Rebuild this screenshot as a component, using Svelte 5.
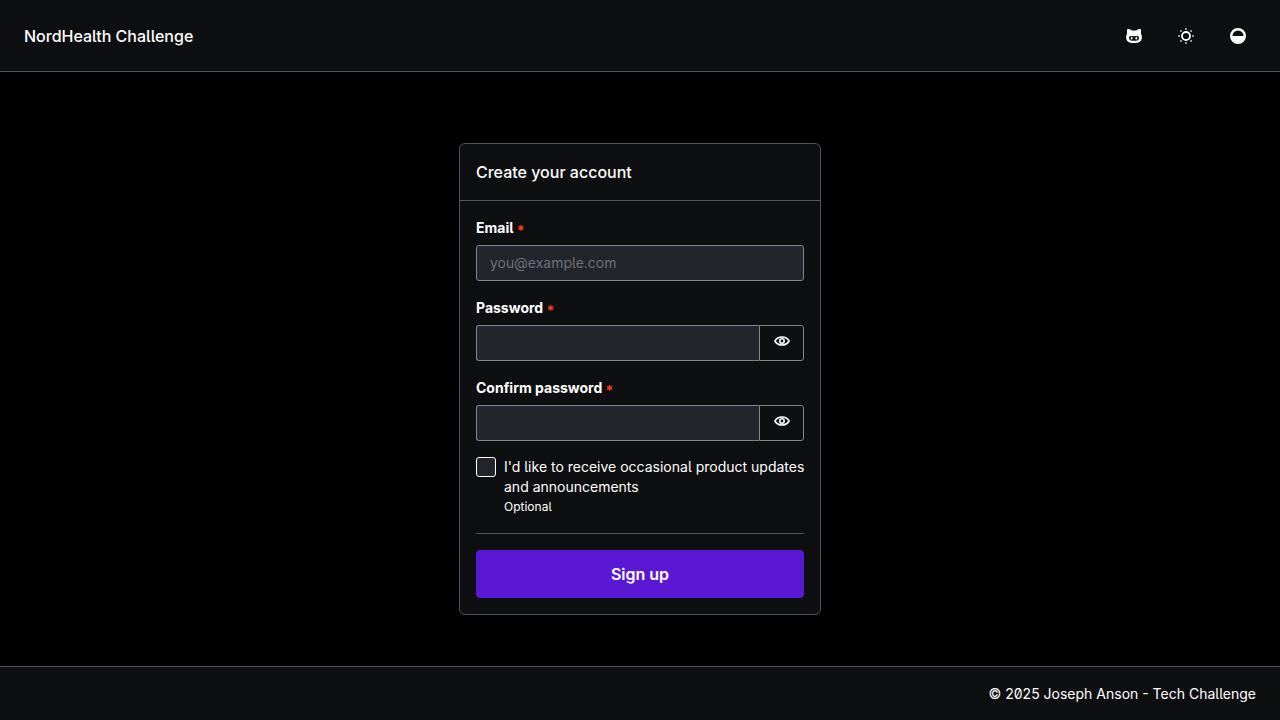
<script>
  let email = $state('');
  let password = $state('');
  let confirmation = $state('');
  let updates = $state(false);
  let visible = $state({ password: false, confirm: false });
</script>

{#snippet eye()}
  <svg class="eye" viewBox="0 0 16 16" fill="none" stroke="currentColor" stroke-width="1.6" aria-hidden="true">
    <path d="M.9 8C2.5 5.200 5.100 4 8 4S13.500 5.200 15.100 8C13.500 10.800 10.900 12 8 12S2.500 10.800 .9 8Z" stroke-linejoin="round" />
    <circle cx="8" cy="8" r="2.200" />
  </svg>
{/snippet}

<div class="page">
  <header class="topbar">
    <span class="brand">NordHealth Challenge</span>
    <nav class="actions" aria-label="Site actions">
      <a href="#source" class="icon-button" aria-label="Source code">
        <svg viewBox="0 0 16 16" aria-hidden="true">
          <path fill="currentColor" fill-rule="evenodd" d="M1 1.900C1 1.200 1.500 1 2.200 1C3.400 1 4.600 1.600 5.600 2.400H10.400C11.400 1.600 12.600 1 13.800 1C14.500 1 15 1.200 15 1.900V6C15.600 6.800 15.900 7.800 15.900 9C15.900 13 13.600 15 8 15S.1 13 .1 9C.1 7.800.4 6.800 1 6ZM5 8C3.700 8 3 8.700 3 10C3 12 4.700 12.800 8 12.800S13 12 13 10C13 8.700 12.300 8 11 8C10 8 9.200 8.200 8 8.200S6 8 5 8Z" />
          <ellipse cx="5.700" cy="10.200" rx=".9" ry="1.200" fill="currentColor" />
          <ellipse cx="10.300" cy="10.200" rx=".9" ry="1.200" fill="currentColor" />
        </svg>
      </a>
      <button type="button" class="icon-button" aria-label="Toggle theme">
        <svg viewBox="0 0 16 16" aria-hidden="true">
          <circle cx="8" cy="8" r="4" fill="none" stroke="currentColor" stroke-width="1.800" />
          <g fill="currentColor" opacity=".55">
            <rect x="7" y="0" width="2" height="2" />
            <rect x="7" y="14" width="2" height="2" />
            <rect x="0" y="7" width="2" height="2" />
            <rect x="14" y="7" width="2" height="2" />
            <rect x="2" y="2" width="2" height="2" />
            <rect x="12" y="2" width="2" height="2" />
            <rect x="2" y="12" width="2" height="2" />
            <rect x="12" y="12" width="2" height="2" />
          </g>
        </svg>
      </button>
      <button type="button" class="icon-button" aria-label="Toggle contrast">
        <svg viewBox="0 0 16 16" aria-hidden="true">
          <path fill="currentColor" fill-rule="evenodd" d="M8 0A8 8 0 1 1 8 16A8 8 0 0 1 8 0ZM2.500 8H13.500A5.500 5.500 0 0 0 2.500 8Z" />
        </svg>
      </button>
    </nav>
  </header>

  <main>
    <section class="card">
      <h1>Create your account</h1>
      <form onsubmit={(e) => e.preventDefault()} novalidate>
        <div class="field">
          <label for="email">Email <span class="required">*</span></label>
          <input id="email" class="control" type="email" placeholder="you@example.com" required bind:value={email} />
        </div>

        <div class="field">
          <label for="password">Password <span class="required">*</span></label>
          <div class="group">
            <input id="password" class="control" type={visible.password ? 'text' : 'password'} required bind:value={password} />
            <button type="button" aria-label="Show password" onclick={() => (visible.password = !visible.password)}>
              {@render eye()}
            </button>
          </div>
        </div>

        <div class="field">
          <label for="confirm">Confirm password <span class="required">*</span></label>
          <div class="group">
            <input id="confirm" class="control" type={visible.confirm ? 'text' : 'password'} required bind:value={confirmation} />
            <button type="button" aria-label="Show confirmed password" onclick={() => (visible.confirm = !visible.confirm)}>
              {@render eye()}
            </button>
          </div>
        </div>

        <div class="check">
          <input id="updates" type="checkbox" aria-describedby="updates-hint" bind:checked={updates} />
          <div class="check-text">
            <label for="updates">I'd like to receive occasional product updates and announcements</label>
            <p id="updates-hint">Optional</p>
          </div>
        </div>

        <hr />
        <button type="submit" class="submit">Sign up</button>
      </form>
    </section>
  </main>

  <footer>© 2025 Joseph Anson - Tech Challenge</footer>
</div>

<style>
  :global(body) {
    margin: 0;
    background: #000;
  }

  .page {
    --surface: #0e0f11;
    --field: #22252b;
    --line: #525560;
    --line-strong: #7e8595;
    display: flex;
    flex-direction: column;
    min-height: 100vh;
    color: #fff;
    background: #000;
    font: 400 14px/20px Inter, 'Liberation Sans', sans-serif;
    font-feature-settings: 'cv05', 'zero';
    -webkit-font-smoothing: antialiased;
  }

  .page *,
  .page {
    box-sizing: border-box;
  }

  button,
  input {
    margin: 0;
    color: inherit;
    font: inherit;
    font-feature-settings: inherit;
  }

  .topbar {
    display: flex;
    align-items: center;
    justify-content: space-between;
    padding: 18px 24px 17px;
    background: var(--surface);
    border-bottom: 1px solid var(--line);
  }

  .brand {
    font-size: 16px;
    font-weight: 450;
  }

  .actions {
    display: flex;
    gap: 16px;
  }

  .icon-button {
    display: grid;
    place-items: center;
    width: 36px;
    height: 36px;
    padding: 0;
    border: 0;
    color: inherit;
    background: none;
  }

  .icon-button svg,
  .eye {
    display: block;
    width: 16px;
    height: 16px;
  }

  main {
    flex: 1;
    display: flex;
    align-items: center;
    justify-content: center;
    padding: 20px 16px 0;
  }

  .card {
    width: 100%;
    max-width: 362px;
    background: var(--surface);
    border: 1px solid var(--line);
    border-radius: 6px;
  }

  h1 {
    margin: 0;
    padding: 18px 16px;
    border-bottom: 1px solid var(--line);
    font-size: 16px;
    font-weight: 450;
    line-height: 20px;
  }

  form {
    display: flex;
    flex-direction: column;
    gap: 16px;
    padding: 16px;
  }

  .field {
    display: flex;
    flex-direction: column;
    gap: 6px;
  }

  .field label {
    font-weight: 700;
    line-height: 22px;
  }

  .required {
    color: #ff3b1f;
    line-height: 1;
    vertical-align: -3px;
  }

  .control {
    flex: 1;
    min-width: 0;
    height: 36px;
    padding: 0 13px 2px;
    border: 1px solid var(--line-strong);
    border-radius: 3px;
    background: var(--field);
  }

  .field > .control {
    flex: none;
  }

  .control::placeholder {
    color: #6d717d;
    opacity: 1;
  }

  .group {
    display: flex;
  }

  .group .control {
    border-right: 0;
    border-radius: 3px 0 0 3px;
  }

  .group button {
    display: grid;
    place-items: center;
    width: 45px;
    height: 36px;
    padding: 0 0 4px;
    border: 1px solid var(--line-strong);
    border-radius: 0 3px 3px 0;
    background: var(--surface);
  }

  .check {
    display: flex;
    gap: 8px;
  }

  .check input {
    flex: none;
    width: 20px;
    height: 20px;
    appearance: none;
    border: 1px solid #fff;
    border-radius: 3px;
    background: var(--field);
  }

  .check input:checked {
    background: #5c18d6;
  }

  .check-text {
    margin-right: -4px;
  }

  .check label {
    display: block;
  }

  .check p {
    margin: 0;
    font-size: 12px;
  }

  hr {
    width: 100%;
    height: 1px;
    margin: 0;
    border: 0;
    background: var(--line);
  }

  .submit {
    height: 48px;
    border: 0;
    border-radius: 4px;
    background: #5a18d4;
    font-size: 16px;
    font-weight: 600;
  }

  footer {
    padding: 17px 24px 16px;
    border-top: 1px solid var(--line);
    background: var(--surface);
    text-align: right;
  }
</style>
